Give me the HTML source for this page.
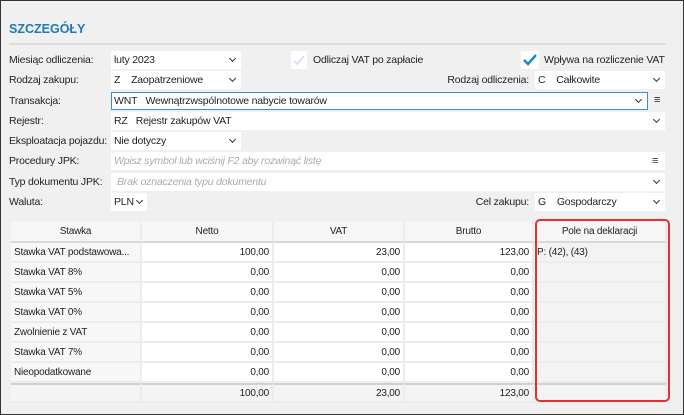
<!DOCTYPE html><html><head><meta charset="utf-8"><style>
*{margin:0;padding:0;box-sizing:border-box}
body{width:684px;height:415px;overflow:hidden;background:#f0f0f0;font-family:"Liberation Sans",sans-serif;font-size:10.5px;letter-spacing:-0.2px;color:#222;position:relative}
.frame{position:absolute;left:0;top:0;width:684px;height:415px;border:1px solid #333}
.a{position:absolute;white-space:nowrap}
.t{position:absolute;left:9px;top:22px;color:#1c7bb5;font-weight:bold;font-size:12.5px;letter-spacing:0}
.hr{position:absolute;left:9px;top:43px;height:2px;background:#ddd;width:657px}
.lbl{position:absolute;left:9px;line-height:18px;top:0}
.in{position:absolute;height:18px;background:#fff;line-height:18px;padding-left:3px;white-space:nowrap}
.ph{color:#aaa;font-style:italic}
.v{position:absolute;width:5px;height:5px;border-right:1.5px solid #333;border-bottom:1.5px solid #333;transform:rotate(45deg)}
.ham{position:absolute;font-size:11px}
table{position:absolute;left:11px;top:222px;border-collapse:separate;border-spacing:0;table-layout:fixed}
td{height:20px;border-right:2px solid #ececec;border-bottom:2px solid #ececec;background:#fff;padding:0 3px;font-size:10px;white-space:nowrap;overflow:hidden}
td.f{background:#f7f7f7}
td.n{text-align:right}
td.p{background:#f3f3f3}
tr.h td{background:#f6f6f6;text-align:center;border-bottom:2px solid #d8d8d8;height:21px}
tr.s td{border-top:2px solid #d0d0d0;background:#f4f4f4}
.red{position:absolute;left:535px;top:219px;width:135px;height:183px;border:2px solid #e0303a;border-radius:5px}
</style></head><body>
<div class="t">SZCZEGÓŁY</div><div class="hr"></div>
<div class="lbl" style="top:51px">Miesiąc odliczenia:</div>
<div class="in" style="left:111px;top:51px;width:130px">luty 2023<i class="v" style="left:119px;top:5px"></i></div>
<div class="in" style="left:291px;top:51px;width:16px"></div>
<svg class="a" style="left:292px;top:53px" width="14" height="14"><path d="M2 8 L5 11 L12 3" stroke="#cde" stroke-width="1.5" fill="none"/></svg>
<div class="a" style="left:313px;top:54px">Odliczaj VAT po zapłacie</div>
<div class="in" style="left:521px;top:51px;width:18px"></div>
<svg class="a" style="left:522px;top:53px" width="16" height="14"><path d="M2 7 L6 11 L14 2" stroke="#1c88d0" stroke-width="2.5" fill="none"/></svg>
<div class="a" style="left:544px;top:54px">Wpływa na rozliczenie VAT</div>
<div class="lbl" style="top:71px">Rodzaj zakupu:</div>
<div class="in" style="left:111px;top:71px;width:130px">Z&nbsp;&nbsp;&nbsp;&nbsp;Zaopatrzeniowe<i class="v" style="left:119px;top:5px"></i></div>
<div class="a" style="right:155px;top:74px">Rodzaj odliczenia:</div>
<div class="in" style="left:535px;top:71px;width:130px">C&nbsp;&nbsp;&nbsp;&nbsp;Całkowite<i class="v" style="left:119px;top:5px"></i></div>
<div class="lbl" style="top:92px">Transakcja:</div>
<div class="in" style="left:111px;top:92px;width:537px;border:1px solid #3a8fd0;line-height:16px;padding-left:2px">WNT&nbsp;&nbsp;&nbsp;Wewnątrzwspólnotowe nabycie towarów<i class="v" style="left:524px;top:4px"></i></div>
<div class="ham" style="left:654px;top:94px">≡</div>
<div class="lbl" style="top:112px">Rejestr:</div>
<div class="in" style="left:111px;top:112px;width:554px">RZ&nbsp;&nbsp;&nbsp;Rejestr zakupów VAT<i class="v" style="left:543px;top:5px"></i></div>
<div class="lbl" style="top:132px">Eksploatacja pojazdu:</div>
<div class="in" style="left:111px;top:132px;width:130px">Nie dotyczy<i class="v" style="left:119px;top:5px"></i></div>
<div class="lbl" style="top:152px">Procedury JPK:</div>
<div class="in ph" style="left:111px;top:152px;width:554px">Wpisz symbol lub wciśnij F2 aby rozwinąć listę<span class="ham" style="left:541px;top:0;font-style:normal;color:#333">≡</span></div>
<div class="lbl" style="top:173px">Typ dokumentu JPK:</div>
<div class="in ph" style="left:111px;top:173px;width:554px;padding-left:6px">Brak oznaczenia typu dokumentu<i class="v" style="left:543px;top:5px"></i></div>
<div class="lbl" style="top:193px">Waluta:</div>
<div class="in" style="left:111px;top:193px;width:36px">PLN<i class="v" style="left:26px;top:5px"></i></div>
<div class="a" style="right:155px;top:196px">Cel zakupu:</div>
<div class="in" style="left:535px;top:193px;width:130px">G&nbsp;&nbsp;&nbsp;&nbsp;Gospodarczy<i class="v" style="left:119px;top:5px"></i></div>
<table>
<colgroup><col style="width:131px"><col style="width:132px"><col style="width:131px"><col style="width:129px"><col style="width:133px"></colgroup>
<tr class="h"><td>Stawka</td><td>Netto</td><td>VAT</td><td>Brutto</td><td>Pole na deklaracji</td></tr>
<tr><td class="f">Stawka VAT podstawowa...</td><td class="n">100,00</td><td class="n">23,00</td><td class="n">123,00</td><td class="p">P: (42), (43)</td></tr>
<tr><td class="f">Stawka VAT 8%</td><td class="n">0,00</td><td class="n">0,00</td><td class="n">0,00</td><td class="p"></td></tr>
<tr><td class="f">Stawka VAT 5%</td><td class="n">0,00</td><td class="n">0,00</td><td class="n">0,00</td><td class="p"></td></tr>
<tr><td class="f">Stawka VAT 0%</td><td class="n">0,00</td><td class="n">0,00</td><td class="n">0,00</td><td class="p"></td></tr>
<tr><td class="f">Zwolnienie z VAT</td><td class="n">0,00</td><td class="n">0,00</td><td class="n">0,00</td><td class="p"></td></tr>
<tr><td class="f">Stawka VAT 7%</td><td class="n">0,00</td><td class="n">0,00</td><td class="n">0,00</td><td class="p"></td></tr>
<tr><td class="f">Nieopodatkowane</td><td class="n">0,00</td><td class="n">0,00</td><td class="n">0,00</td><td class="p"></td></tr>
<tr class="s"><td></td><td class="n">100,00</td><td class="n">23,00</td><td class="n">123,00</td><td></td></tr>
</table>
<div class="red"></div>
<div class="frame"></div>
</body></html>
